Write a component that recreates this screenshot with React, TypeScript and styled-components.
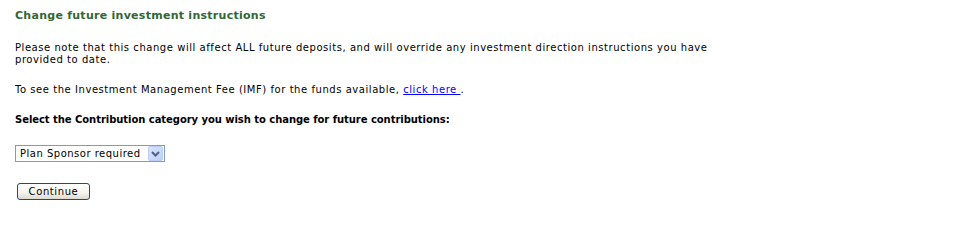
import React from 'react';
import styled, { createGlobalStyle } from 'styled-components';

const GlobalStyle = createGlobalStyle`
  html, body {
    margin: 0;
    padding: 0;
    background: #ffffff;
  }
  body {
    font-family: 'DejaVu Sans', Verdana, sans-serif;
    font-size: 10px;
    letter-spacing: 0.55px;
    color: #000000;
  }
`;

const Page = styled.div`
  padding: 9px 15px 0 15px;
  width: 700px;
`;

const Title = styled.h1`
  margin: 0 0 20px 0;
  font-size: 11px;
  font-weight: bold;
  letter-spacing: 0.27px;
  color: #336633;
  line-height: 13px;
`;

const Para = styled.p`
  margin: 0 0 18px 0;
  line-height: 12px;
`;

const Link = styled.a`
  color: #0000ff;
  text-decoration: underline;
`;

const Label = styled.p`
  margin: 0 0 19px 0;
  font-weight: bold;
  letter-spacing: -0.05px;
  line-height: 12px;
`;

const SelectBox = styled.div`
  display: flex;
  align-items: center;
  box-sizing: border-box;
  height: 17px;
  width: 150px;
  border: 1px solid #7f9db9;
  background: #fff;
  padding: 0 1px 0 0;
`;

const NativeSelect = styled.select`
  appearance: none;
  border: none;
  outline: none;
  background: transparent;
  font-family: inherit;
  font-size: 10px;
  letter-spacing: 0.5px;
  color: #000;
  padding: 0 0 0 4px;
  margin: 0;
  flex: 1;
  height: 15px;
`;

const Arrow = styled.span`
  display: flex;
  align-items: center;
  justify-content: center;
  width: 15px;
  height: 15px;
  box-sizing: border-box;
  border: 1px solid #b9cdf6;
  border-radius: 2px;
  background: linear-gradient(135deg, #d7e3fd 0%, #c0d2fa 100%);
`;

const ButtonRow = styled.div`
  margin-top: 21px;
  padding-left: 2px;
`;

const Button = styled.button`
  width: 73px;
  height: 17px;
  padding: 0;
  border: 1px solid #1c4a86;
  border-radius: 3px;
  background: linear-gradient(#ffffff 0%, #f4f3ee 60%, #dcdad0 100%);
  font-family: inherit;
  font-size: 10px;
  letter-spacing: 0.6px;
  color: #000;
  line-height: 14px;
`;

export default function App() {
  return (
    <>
      <GlobalStyle />
      <Page>
        <Title>Change future investment instructions</Title>
        <Para>
          Please note that this change will affect ALL future deposits, and will override any
          investment direction instructions you have provided to date.
        </Para>
        <Para>
          To see the Investment Management Fee (IMF) for the funds available,{' '}
          <Link href="#">click here </Link>.
        </Para>
        <Label>Select the Contribution category you wish to change for future contributions:</Label>
        <SelectBox>
          <NativeSelect defaultValue="ps">
            <option value="ps">Plan Sponsor required</option>
          </NativeSelect>
          <Arrow>
            <svg width="9" height="6" viewBox="0 0 9 6">
              <path d="M1 1 L4.5 4.5 L8 1" stroke="#4d6185" strokeWidth="2" fill="none" />
            </svg>
          </Arrow>
        </SelectBox>
        <ButtonRow>
          <Button>Continue</Button>
        </ButtonRow>
      </Page>
    </>
  );
}
